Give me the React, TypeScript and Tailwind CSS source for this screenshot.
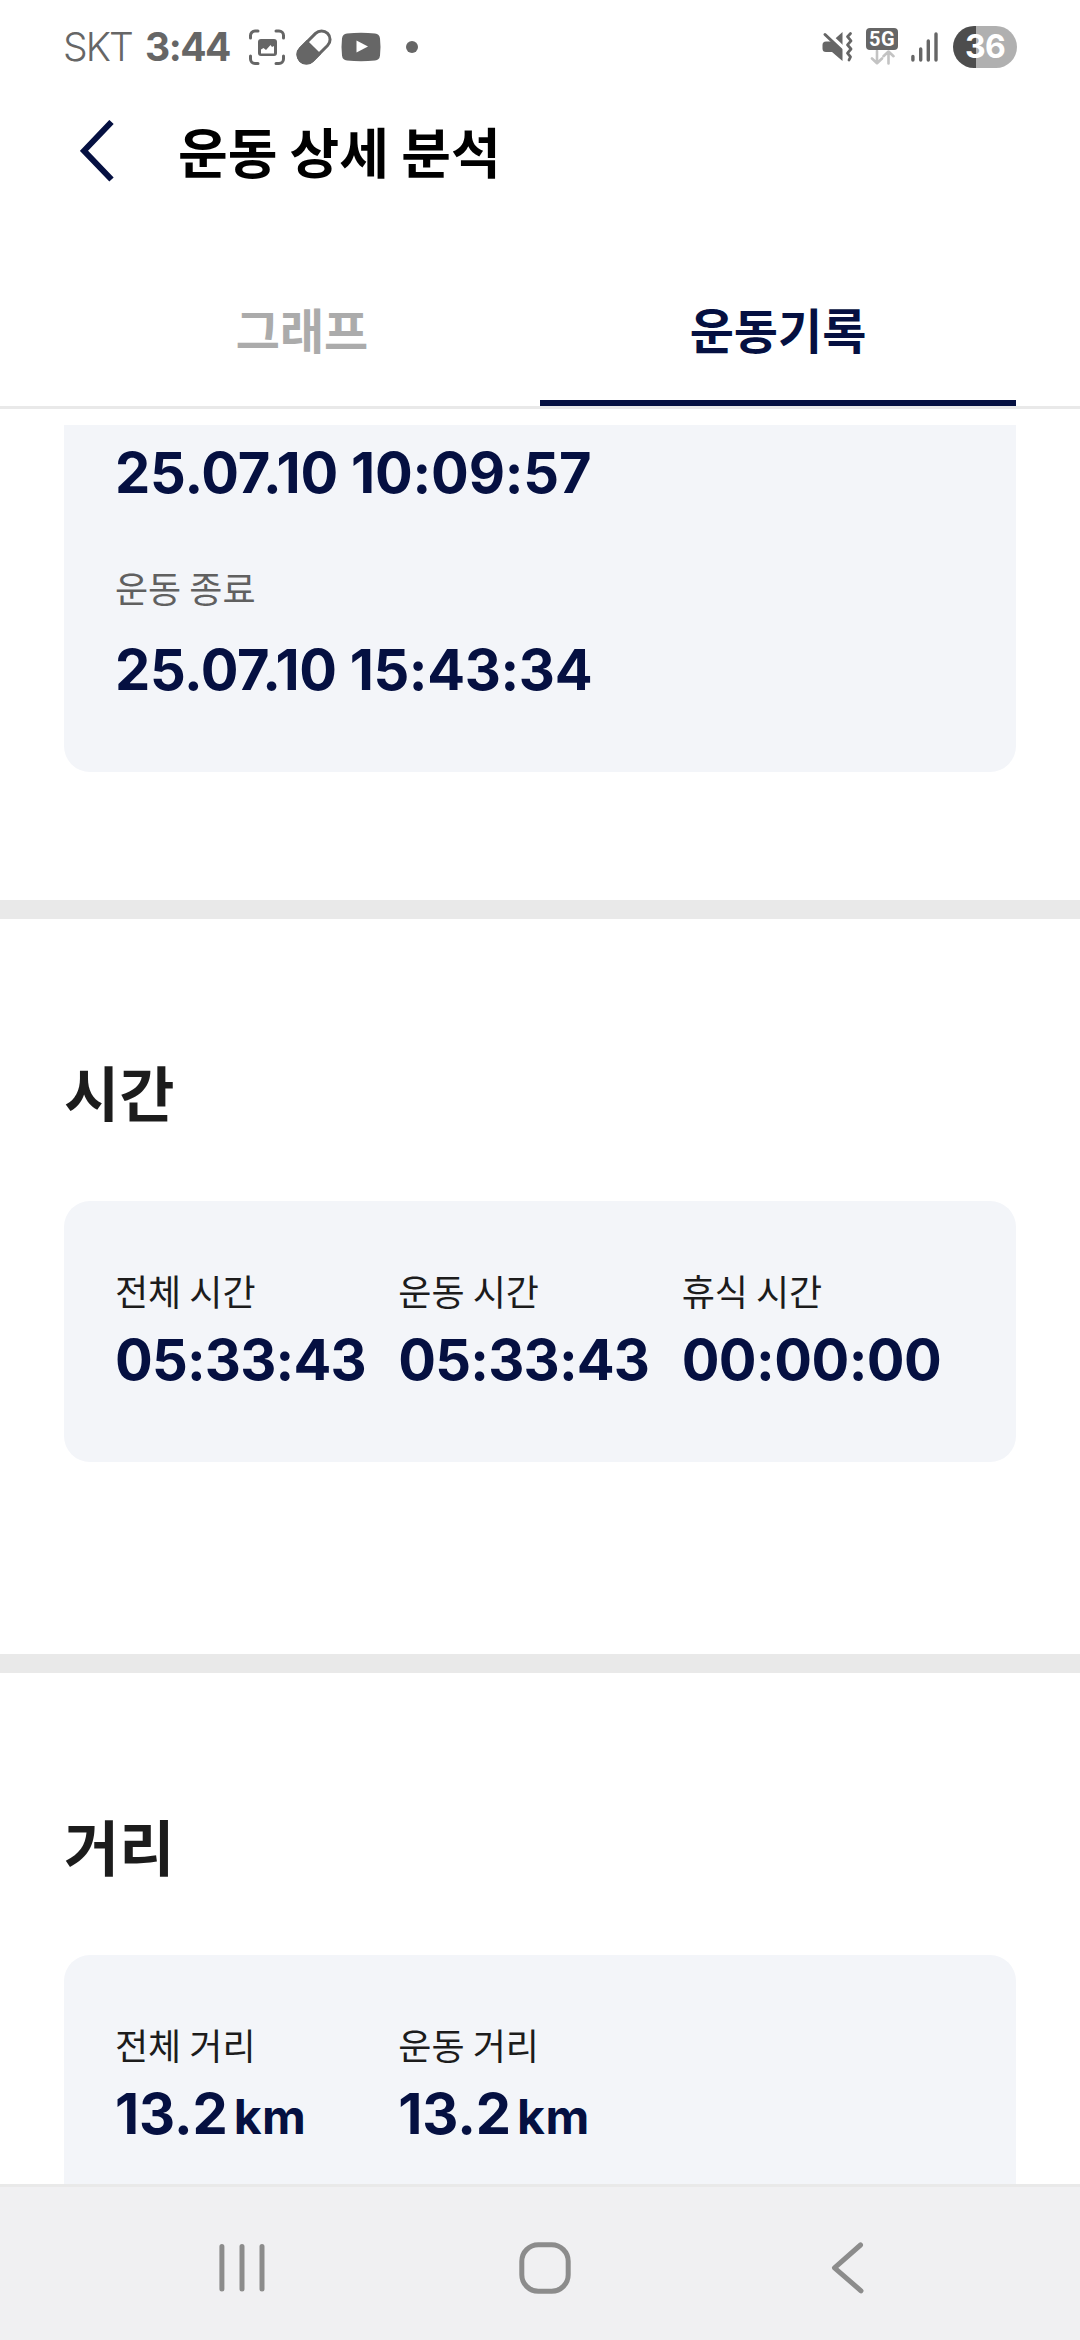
import React from "react";

const KR = "font-['Noto_Sans_CJK_KR',sans-serif]";
const NUM = "font-['Inter',sans-serif] font-[670] text-[56px] leading-[68px] text-[#051041]";

function StatusBar() {
  return (
    <header className="flex h-[94px] shrink-0 items-center justify-between px-[63px] text-[#666666]">
      <div className="flex items-center font-['Inter',sans-serif] text-[39px] leading-[94px]">
        <span className="w-[82px] font-[360] tracking-[-1.9px]">SKT</span>
        <span className="w-[104px] font-[660] tracking-[-1.5px]">3:44</span>
        <svg className="h-[36px] w-[36px]" viewBox="0 0 36 36" fill="none" stroke="#666666" strokeWidth="3" strokeLinecap="round">
          <path d="M9 2H6a4.500 4.500 0 0 0-4.500 4.500V9M27 2h3a4.500 4.500 0 0 1 4.500 4.500V9M9 34.500H6A4.500 4.500 0 0 1 1.500 30V27M27 34.500h3a4.500 4.500 0 0 0 4.500-4.500V27" />
          <rect x="9" y="10" width="19" height="17" rx="3" fill="#666666" stroke="none" />
          <path d="M12 24.500v-4l2.500-1.500 2.500 2 4.500-5 1.500 2 2-1v7.500z" fill="#fff" stroke="none" />
        </svg>
        <svg className="ml-[11px] h-[36px] w-[36px]" viewBox="0 0 36 36">
          <g transform="rotate(45 18 18)">
            <rect x="9.500" y="-1.200" width="17" height="38.400" rx="8.500" fill="none" stroke="#666666" strokeWidth="3" />
            <path d="M8 18h20v10.700a10 10 0 0 1-20 0z" fill="#666666" />
          </g>
        </svg>
        <svg className="ml-[9px] h-[30px] w-[40px]" viewBox="0 0 40 30">
          <path d="M6 1.500Q20 0 34 1.500Q38.500 2 39 6.500Q40 15 39 23.500Q38.500 28 34 28.500Q20 30 6 28.500Q1.500 28 1 23.500Q0 15 1 6.500Q1.500 2 6 1.500Z" fill="#666666" />
          <path d="M15.500 8.500v12L27 14.500z" fill="#fff" />
        </svg>
        <span className="ml-[25px] h-3 w-3 rounded-full bg-[#666666]" />
      </div>
      <div className="flex items-center">
        <svg className="h-[32px] w-[32px]" viewBox="0 0 32 32">
          <path d="M4 10.500h6L20.500 1v29L10 21H4a3.500 3.500 0 0 1-3.500-3.500V14A3.500 3.500 0 0 1 4 10.500z" fill="#666666" />
          <path d="M2 -1.200L24 19.800" stroke="#fff" strokeWidth="4" />
          <path d="M3 3.500L19 18.700" stroke="#666666" strokeWidth="3" strokeLinecap="round" />
          <path d="M28.500 2.500l-3 3.200 3.500 4.100-3.500 4.100 3.500 4.100-3.500 4.100 3 3.800-1.500 3.100" fill="none" stroke="#666666" strokeWidth="2.800" strokeLinecap="round" strokeLinejoin="round" />
        </svg>
        <div className="ml-[12px] mt-[-1px] flex w-[32px] flex-col items-center">
          <span className="flex h-[22px] w-[32px] items-center justify-center rounded-[4px] bg-[#666666] font-['Roboto',sans-serif] text-[20px] font-bold leading-[22px] tracking-[0.5px] text-white">5G</span>
          <svg className="h-[15px] w-[26px]" viewBox="0 0 26 15" fill="none" stroke="#c3c3c3" strokeWidth="2.600" strokeLinecap="round" strokeLinejoin="round">
            <path d="M8 1v12M3 8.500L8 13.200L13 8.500M19.500 13.500V2M14.500 6.200L19.500 1.500L24.500 6.200" />
          </svg>
        </div>
        <svg className="ml-[13px] h-[30px] w-[27px]" viewBox="0 0 27 30" stroke="#666666" strokeWidth="3.400" strokeLinecap="round">
          <path d="M1.900 24.500v3.500M9.700 17v11M17.300 9v19M25 2v26" />
        </svg>
        <span className="ml-[15px] flex h-[42px] w-[64px] items-center justify-center rounded-full bg-[linear-gradient(90deg,#4d4d4d_23px,#b0b0b0_23px)] font-['Inter',sans-serif] text-[32px] font-[660] leading-[42px] tracking-[-0.6px] text-white">36</span>
      </div>
    </header>
  );
}

function Stat({ label, value, unit, spacing }: { label: string; value: string; unit?: string; spacing: string }) {
  return (
    <div>
      <div className={`${KR} text-[36px] leading-[54px] text-[#1c1c1c]`}>{label}</div>
      <div className={`${NUM} mt-[9px] flex items-baseline whitespace-nowrap`}>
        <span className={spacing}>{value}</span>
        {unit && <span className="ml-[6px] text-[48px] tracking-[0.5px]">{unit}</span>}
      </div>
    </div>
  );
}

export default function App() {
  return (
    <div className="flex h-[2340px] w-[1080px] flex-col overflow-hidden bg-white">
      <StatusBar />
      <div className="flex h-[113px] shrink-0 items-center pl-[80px]">
        <svg className="h-[62px] w-[34px]" viewBox="0 0 34 62" fill="none" stroke="#051041" strokeWidth="6">
          <path d="M31.500 2L4 30.800L31.500 59.500" />
        </svg>
        <h1 className={`${KR} ml-[64px] text-[54px] font-bold leading-[80px] text-black`}>운동 상세 분석</h1>
      </div>
      <nav className={`${KR} mt-[44px] flex h-[158px] shrink-0 border-b-3 border-[#e9e9e9] px-16 text-center text-[48px] font-bold leading-[155px]`}>
        <div className="flex-1 text-[#ababab]">그래프</div>
        <div className="flex-1 border-b-6 border-[#051041] text-[#051041]">운동기록</div>
      </nav>

      <main className="min-h-0 flex-1 overflow-hidden pt-4">
        <section className="px-16 pb-32">
          <div className="h-[347px] rounded-b-[26px] bg-[#f3f5f9] px-[51px] pt-[14px]">
            <div className={`${NUM} tracking-[-0.2px]`}>25.07.10 10:09:57</div>
            <div className={`${KR} mt-[53px] text-[36px] leading-[54px] text-[#606060]`}>운동 종료</div>
            <div className={`${NUM} mt-[22px] tracking-[-0.36px]`}>25.07.10 15:43:34</div>
          </div>
        </section>
        <section className="h-[754px] border-t-19 border-[#e9e9e9] px-16 pt-[127px]">
          <h2 className={`${KR} text-[60px] font-bold leading-[90px] text-[#1c1c1c]`}>시간</h2>
          <div className="mt-[65px] grid h-[261px] grid-cols-3 rounded-[26px] bg-[#f3f5f9] px-[51px] pt-[62px]">
            <Stat label="전체 시간" value="05:33:43" spacing="tracking-[-0.8px]" />
            <Stat label="운동 시간" value="05:33:43" spacing="tracking-[-0.8px]" />
            <Stat label="휴식 시간" value="00:00:00" spacing="tracking-[-0.55px]" />
          </div>
        </section>
        <section className="h-[754px] border-t-19 border-[#e9e9e9] px-16 pt-[127px]">
          <h2 className={`${KR} text-[60px] font-bold leading-[90px] text-[#1c1c1c]`}>거리</h2>
          <div className="mt-[65px] grid h-[261px] grid-cols-3 rounded-[26px] bg-[#f3f5f9] px-[51px] pt-[62px]">
            <Stat label="전체 거리" value="13.2" unit="km" spacing="tracking-[-0.1px]" />
            <Stat label="운동 거리" value="13.2" unit="km" spacing="tracking-[-0.1px]" />
          </div>
        </section>
      </main>

      <footer className="flex h-[156px] shrink-0 justify-between border-t-3 border-[#e9e9e9] bg-[#f0f0f2] pl-[219px] pr-[215px] pt-[55px]">
        <svg className="h-[52px] w-[46px]" viewBox="0 0 46 52" stroke="#8c8c8c" strokeWidth="5" strokeLinecap="round">
          <path d="M2.900 4.500v42.500M23 4.500v42.500M43 4.500v42.500" />
        </svg>
        <svg className="mr-[7px] h-[52px] w-[52px]" viewBox="0 0 52 52" fill="none" stroke="#8c8c8c" strokeWidth="5">
          <rect x="2.800" y="2.800" width="46.400" height="46.400" rx="16.500" />
        </svg>
        <svg className="h-[52px] w-[34px]" viewBox="0 0 34 52" fill="none" stroke="#8c8c8c" strokeWidth="5" strokeLinecap="round" strokeLinejoin="round">
          <path d="M29.500 3L3.500 25.800L30 48.800" />
        </svg>
      </footer>
    </div>
  );
}
